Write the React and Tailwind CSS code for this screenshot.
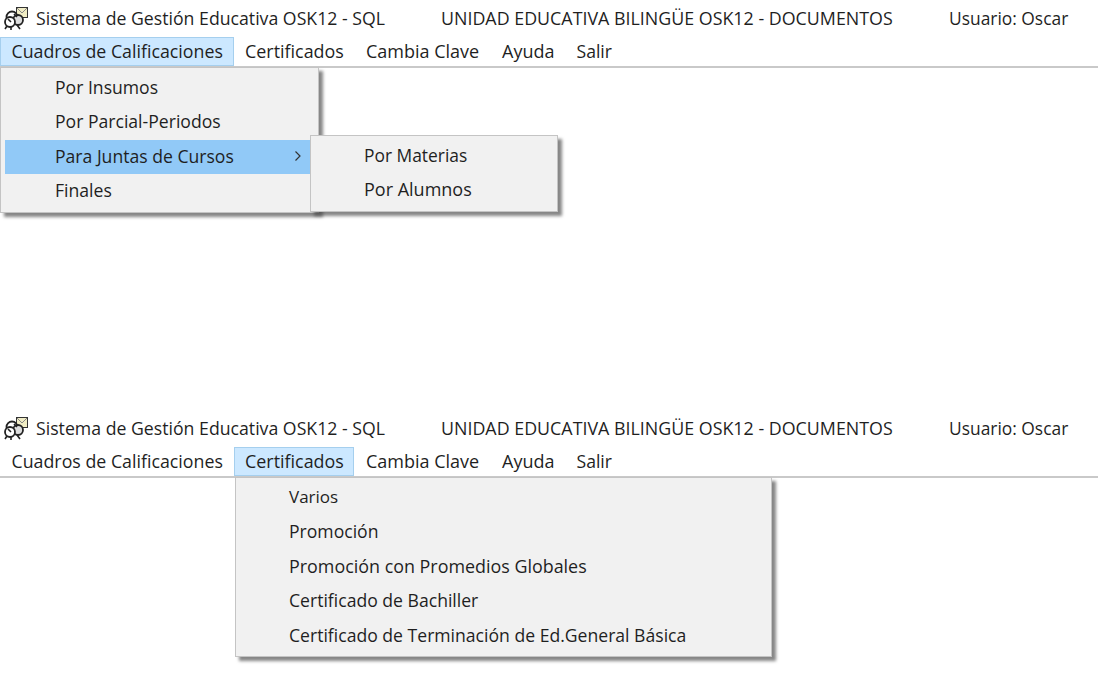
const menus = [
  { label: "Cuadros de Calificaciones", box: "w-[234px] pl-[10.5px] text-[17.8px]" },
  { label: "Certificados", box: "w-[120px] pl-[10px] text-[17.9px]" },
  { label: "Cambia Clave", box: "w-[136px] pl-[11px] text-[18px]" },
  { label: "Ayuda", box: "w-[75px] pl-[11px] text-[18px]" },
  { label: "Salir", box: "w-[60px] pl-[10.5px] text-[17.6px]" },
];

const AppIcon = () => (
  <svg width="26" height="25" viewBox="0 0 26 25" className="shrink-0">
    <rect x="13.5" y="1.5" width="11" height="10" fill="#f0ecc4" stroke="#333" />
    <path d="M14 2l5 5 5-5" fill="none" stroke="#888" />
    <circle cx="9" cy="11" r="5.5" fill="#fff" stroke="#222" strokeWidth="1.8" />
    <circle cx="15" cy="14" r="5" fill="#ddd" stroke="#222" strokeWidth="1.8" />
    <circle cx="7" cy="16" r="5" fill="#fff" stroke="#222" strokeWidth="1.8" />
    <path d="M4 20l-2 3M8 21v3M14 19l3 4M11 8l3 3M5 13l3 3" fill="none" stroke="#222" strokeWidth="1.6" />
  </svg>
);

const TitleBar = () => (
  <div className="flex h-[37px] items-center pb-[1px] pl-[3px] text-[#1f1f1f]">
    <AppIcon />
    <span className="ml-[7px] w-[405px] text-[17.7px]">Sistema de Gestión Educativa OSK12 - SQL</span>
    <span className="w-[508px] text-[17.85px]">UNIDAD EDUCATIVA BILINGÜE OSK12 - DOCUMENTOS</span>
    <span className="text-[17.4px]">Usuario: Oscar</span>
  </div>
);

const MenuBar = ({ active }) => (
  <div className="flex h-[31px] items-stretch border-b-2 border-[#c9c9c9] text-[#1f1f1f]">
    {menus.map((m, i) => (
      <div
        key={m.label}
        className={`flex items-center border pb-[1px] ${m.box} ${
          i === active ? "border-[#a5cfee] bg-[#cce8ff]" : "border-transparent"
        }`}
      >
        {m.label}
      </div>
    ))}
  </div>
);

const Item = ({ label, pad, selected, arrow, size = "" }) => (
  <div
    className={`flex h-[34.4px] items-center justify-between pb-[2px] ${pad} ${size} ${
      selected ? "bg-[#91c9f7]" : ""
    }`}
  >
    <span>{label}</span>
    {arrow && (
      <svg width="8" height="12" viewBox="0 0 8 12" className="mr-[12px]">
        <path d="M1.5 1.5L6 6l-4.5 4.5" fill="none" stroke="#333" strokeWidth="1.2" />
      </svg>
    )}
  </div>
);

const App = () => {
  return (
    <div className="h-[674px] w-[1098px] overflow-hidden bg-white text-[17.6px] font-['Open_Sans',sans-serif]">
      {/* Primera ventana */}
      <div className="relative h-[410px]">
        <TitleBar />
        <MenuBar active={0} />
        <div className="absolute left-0 top-[67px] w-[319px] border border-[#c4c4c4] bg-[#f1f1f1] px-[4px] py-[3px] text-[#1f1f1f] shadow-[4px_4px_3px_rgba(70,70,70,0.65)]">
          <Item label="Por Insumos" pad="pl-[50px]" />
          <Item label="Por Parcial-Periodos" pad="pl-[50px]" />
          <Item label="Para Juntas de Cursos" pad="pl-[50px]" selected arrow />
          <Item label="Finales" pad="pl-[50px]" />
        </div>
        <div className="absolute left-[310px] top-[135px] w-[248px] border border-[#c4c4c4] bg-[#f1f1f1] py-[3px] text-[#1f1f1f] shadow-[4px_4px_3px_rgba(70,70,70,0.65)]">
          <Item label="Por Materias" pad="pl-[53px]" size="text-[17.4px]" />
          <Item label="Por Alumnos" pad="pl-[53px]" size="text-[18px]" />
        </div>
      </div>

      {/* Segunda ventana */}
      <div className="relative h-[264px]">
        <TitleBar />
        <MenuBar active={1} />
        <div className="absolute left-[235px] top-[67px] w-[537px] border border-[#c4c4c4] bg-[#f1f1f1] py-[3px] text-[#1f1f1f] shadow-[4px_4px_3px_rgba(70,70,70,0.65)]">
          <Item label="Varios" pad="pl-[53px]" size="text-[17px]" />
          <Item label="Promoción" pad="pl-[53px]" />
          <Item label="Promoción con Promedios Globales" pad="pl-[53px]" size="text-[17.9px]" />
          <Item label="Certificado de Bachiller" pad="pl-[53px]" />
          <Item label="Certificado de Terminación de Ed.General Básica" pad="pl-[53px]" />
        </div>
      </div>
    </div>
  );
};

export default App;
